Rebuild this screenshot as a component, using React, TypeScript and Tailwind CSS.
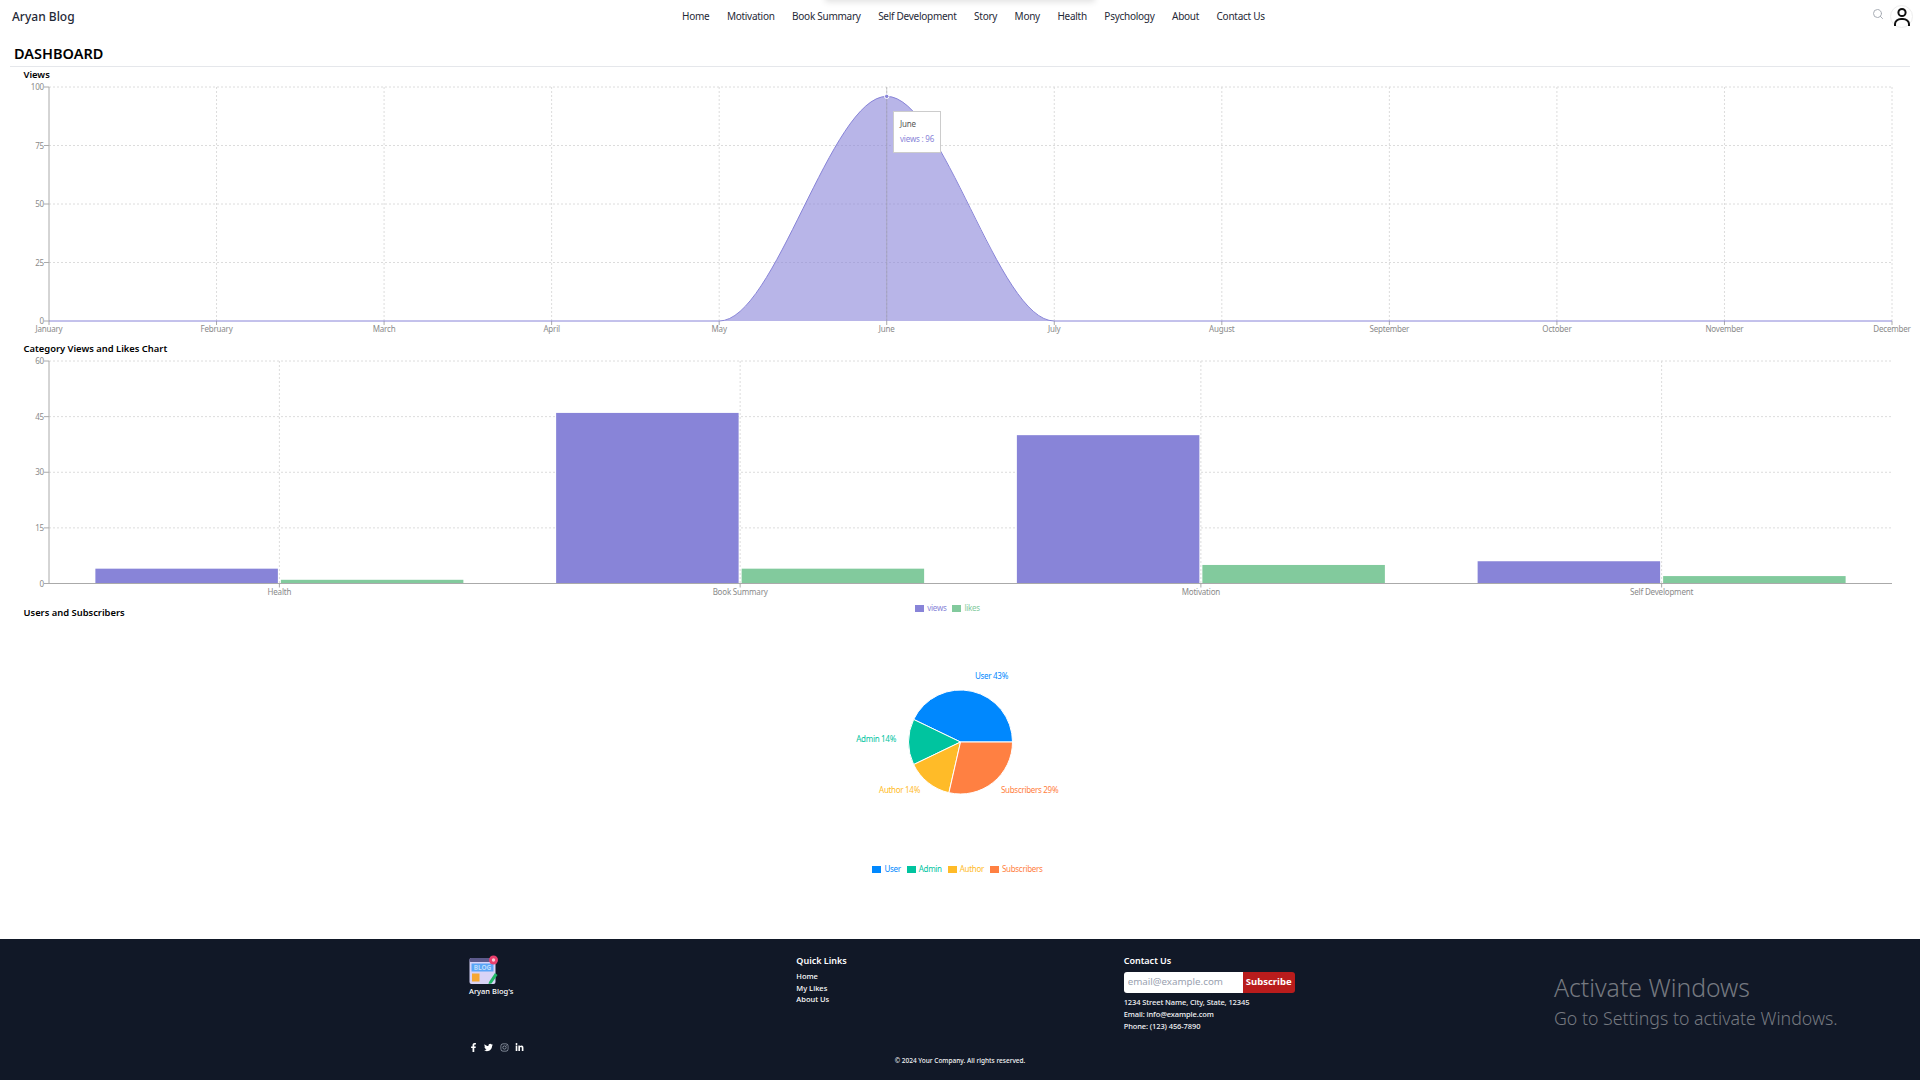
import { Search } from 'lucide-react'
import { FaFacebookF, FaInstagram, FaLinkedinIn, FaTwitter } from 'react-icons/fa'

const navLinks = ['Home', 'Motivation', 'Book Summary', 'Self Development', 'Story', 'Mony', 'Health', 'Psychology', 'About', 'Contact Us']
const months = ['January', 'February', 'March', 'April', 'May', 'June', 'July', 'August', 'September', 'October', 'November', 'December']
const categories = [
  { name: 'Health', views: 4, likes: 1 },
  { name: 'Book Summary', views: 46, likes: 4 },
  { name: 'Motivation', views: 40, likes: 5 },
  { name: 'Self Development', views: 6, likes: 2 },
]

const LEFT = 49
const RIGHT = 1892

const tickText = 'fill-[#8a8a8a] text-[8px] tracking-[-0.2px]'

// views area chart, coordinates are page x and local y
function ViewsChart() {
  const top = 5
  const bottom = 239
  const step = (RIGHT - LEFT) / 11
  const xs = months.map((_, i) => LEFT + i * step)
  const peak = bottom - (bottom - top) * 0.96
  const may = xs[4]
  const june = xs[5]
  const july = xs[6]
  const d = step / 3
  const curve = `M${LEFT},${bottom} L${may},${bottom} C${may + d},${bottom} ${june - d},${peak} ${june},${peak} C${june + d},${peak} ${july - d},${bottom} ${july},${bottom} L${RIGHT},${bottom}`

  return (
    <div className="relative h-[259px]">
      <svg className="h-full w-full" xmlns="http://www.w3.org/2000/svg">
        {[0, 25, 50, 75, 100].map((v) => {
          const y = bottom - ((bottom - top) * v) / 100
          return (
            <g key={v}>
              {v > 0 && <line x1={LEFT} x2={RIGHT} y1={y} y2={y} stroke="#dcdcdc" strokeDasharray="2 2" />}
              <line x1={LEFT - 5} x2={LEFT} y1={y} y2={y} stroke="#aaa" />
              <text x={LEFT - 5} y={y + 3} textAnchor="end" className={tickText}>{v}</text>
            </g>
          )
        })}
        {xs.map((x, i) => (
          <g key={months[i]}>
            {i > 0 && <line x1={x} x2={x} y1={top} y2={bottom} stroke="#dcdcdc" strokeDasharray="2 2" />}
            <line x1={x} x2={x} y1={bottom} y2={bottom + 4} stroke="#aaa" />
            <text x={x} y={bottom + 11} textAnchor="middle" className={tickText}>{months[i]}</text>
          </g>
        ))}
        <line x1={LEFT} x2={LEFT} y1={top} y2={bottom} stroke="#aaa" />
        <path d={`${curve} Z`} fill="#8884d8" fillOpacity={0.6} />
        <path d={curve} fill="none" stroke="#8884d8" />
        <line x1={june} x2={june} y1={top} y2={bottom} stroke="#999" strokeOpacity={0.45} />
        <circle cx={june} cy={peak} r={2.2} fill="#8884d8" stroke="#fff" strokeWidth={1} />
      </svg>
      <div className="absolute left-[893px] top-[29px] h-[42px] w-[48px] border border-[#ccc] bg-white pl-[6px] pt-[3.5px] text-[8px] leading-[15px] tracking-[-0.2px]">
        <p className="text-[#555]">June</p>
        <p className="whitespace-nowrap text-[#8884d8]">views : 96</p>
      </div>
    </div>
  )
}

function CategoryChart() {
  const top = 5
  const bottom = 227.5
  const band = (RIGHT - LEFT) / 4
  const h = bottom - top
  return (
    <div className="relative h-[249px]">
      <svg className="h-full w-full" xmlns="http://www.w3.org/2000/svg">
        {[0, 15, 30, 45, 60].map((v) => {
          const y = bottom - (h * v) / 60
          return (
            <g key={v}>
              {v > 0 && <line x1={LEFT} x2={RIGHT} y1={y} y2={y} stroke="#dcdcdc" strokeDasharray="2 2" />}
              <line x1={LEFT - 5} x2={LEFT} y1={y} y2={y} stroke="#aaa" />
              <text x={LEFT - 5} y={y + 3} textAnchor="end" className={tickText}>{v}</text>
            </g>
          )
        })}
        {categories.map((c, i) => {
          const cx = LEFT + band * i + band / 2
          const hv = (h * c.views) / 60
          const hl = (h * c.likes) / 60
          return (
            <g key={c.name}>
              <line x1={cx} x2={cx} y1={top} y2={bottom} stroke="#dcdcdc" strokeDasharray="2 2" />
              <rect x={cx - 184} y={bottom - hv} width={182.5} height={hv} fill="#8884d8" />
              <rect x={cx + 1.5} y={bottom - hl} width={182.5} height={hl} fill="#82ca9d" />
              <line x1={cx} x2={cx} y1={bottom} y2={bottom + 4} stroke="#aaa" />
              <text x={cx} y={bottom + 11} textAnchor="middle" className={tickText}>{c.name}</text>
            </g>
          )
        })}
        <line x1={LEFT} x2={LEFT} y1={top} y2={bottom} stroke="#aaa" />
        <line x1={LEFT} x2={RIGHT} y1={bottom} y2={bottom} stroke="#aaa" />
      </svg>
      <div className="absolute left-0 right-[25px] top-[244px]">
        <Legend items={[{ name: 'views', color: '#8884d8' }, { name: 'likes', color: '#82ca9d' }]} />
      </div>
    </div>
  )
}

function Legend({ items }: { items: { name: string; color: string }[] }) {
  return (
    <div className="flex justify-center gap-[6px] text-[8px] leading-[16px] tracking-[-0.3px]">
      {items.map((item) => (
        <span key={item.name} className="flex items-center gap-[3px]" style={{ color: item.color }}>
          <span className="h-[7px] w-[9px]" style={{ background: item.color }} />
          {item.name}
        </span>
      ))}
    </div>
  )
}

const slices = [
  { name: 'User', pct: 3 / 7, color: '#0088FE', label: 'User 43%', lx: 975, ly: 59, anchor: 'start' },
  { name: 'Admin', pct: 1 / 7, color: '#00C49F', label: 'Admin 14%', lx: 896, ly: 122, anchor: 'end' },
  { name: 'Author', pct: 1 / 7, color: '#FFBB28', label: 'Author 14%', lx: 920, ly: 173, anchor: 'end' },
  { name: 'Subscribers', pct: 2 / 7, color: '#FF8042', label: 'Subscribers 29%', lx: 1001, ly: 173, anchor: 'start' },
]

function PieChart() {
  const cx = 960.5
  const cy = 122
  const r = 52
  let angle = 0
  return (
    <div className="pb-[62px] pr-[5px]">
      <svg className="h-[241px] w-full overflow-visible" xmlns="http://www.w3.org/2000/svg">
        {slices.map((s) => {
          const a0 = angle
          const a1 = angle + s.pct * Math.PI * 2
          angle = a1
          const x0 = cx + r * Math.cos(a0)
          const y0 = cy - r * Math.sin(a0)
          const x1 = cx + r * Math.cos(a1)
          const y1 = cy - r * Math.sin(a1)
          return (
            <path
              key={s.name}
              d={`M${cx},${cy} L${x0},${y0} A${r},${r} 0 0 0 ${x1},${y1} Z`}
              fill={s.color}
              stroke="#fff"
            />
          )
        })}
        {slices.map((s) => (
          <text key={s.label} x={s.lx} y={s.ly} textAnchor={s.anchor as 'start' | 'end'} fill={s.color} className="text-[8px] tracking-[-0.3px]">
            {s.label}
          </text>
        ))}
      </svg>
      <Legend items={slices.map((s) => ({ name: s.name, color: s.color }))} />
    </div>
  )
}

function BlogLogo() {
  return (
    <svg width="30" height="30" viewBox="0 0 30 30" xmlns="http://www.w3.org/2000/svg">
      <rect x="0.5" y="3" width="26" height="26" rx="2" fill="#d8d3f7" />
      <rect x="0.5" y="3" width="26" height="4" rx="1.5" fill="#5d5a8c" />
      <rect x="2.5" y="8.5" width="22" height="8" fill="#5aa5f7" />
      <text x="13.5" y="15" textAnchor="middle" fill="#bcdcfb" className="text-[6.5px] font-bold">BLOG</text>
      <rect x="3" y="18.5" width="7.5" height="8" fill="#f6a733" />
      <path d="M20 27 L26 18 L28.5 20 L22.5 28.5 L19.5 29 Z" fill="#22b866" />
      <circle cx="24.5" cy="5" r="4.5" fill="#ea3f6d" />
      <circle cx="24.5" cy="5" r="1.7" fill="#f9c9d6" />
    </svg>
  )
}

function App() {
  return (
    <div className="relative min-h-screen overflow-hidden bg-white font-['Noto_Sans',sans-serif]">
      {/* shadow of the closed dropdown above the page */}
      <div className="absolute -top-[10px] left-[825px] h-[10px] w-[270px] bg-white shadow-[0_2px_6px_rgba(0,0,0,0.12)]" />

      {/* Header */}
      <div className="flex h-[33px] items-center text-[#1f2937]">
        <div className="w-[682px] pl-3 text-[12px] font-medium">Aryan Blog</div>
        <nav className="flex gap-[17.5px] text-[10px] tracking-[-0.27px]">
          {navLinks.map((link) => (
            <a key={link}>{link}</a>
          ))}
        </nav>
        <div className="ml-auto mr-[7px] flex items-center gap-[6px]">
          <Search size={12} className="-mt-[6px] text-[#a8adb5]" />
          <span className="flex h-[23px] w-[23px] items-center justify-center rounded-full border border-[#eee]">
            <svg width="18" height="20" viewBox="0 0 18 20" fill="none" stroke="#111" strokeWidth="2">
              <circle cx="9" cy="5.5" r="3.6" />
              <path d="M2 19 v-2 a6 5 0 0 1 6 -5 h2 a6 5 0 0 1 6 5 v2" />
            </svg>
          </span>
        </div>
      </div>

      {/* Title */}
      <div className="mx-[10px] flex h-[34px] items-end border-b border-[#e5e7eb] pb-[3px] pl-1">
        <h1 className="text-[14.5px] font-semibold leading-[20px] text-black">DASHBOARD</h1>
      </div>

      <ChartTitle>Views</ChartTitle>
      <ViewsChart />
      <ChartTitle>Category Views and Likes Chart</ChartTitle>
      <CategoryChart />
      <ChartTitle>Users and Subscribers</ChartTitle>
      <PieChart />

      {/* Footer */}
      <footer className="h-[141px] bg-[#111827] pt-[16px] text-white">
        <div className="mx-auto grid w-[982px] grid-cols-3">
          <div className="h-[100px]">
            <BlogLogo />
            <p className="text-[7.5px] font-medium leading-[12px]">Aryan Blog's</p>
            <div className="-ml-[3.5px] mt-[46px] flex items-center text-[9px]">
              <span className="flex w-[15.5px] justify-center"><FaFacebookF /></span>
              <span className="flex w-[15.5px] justify-center"><FaTwitter /></span>
              <span className="flex w-[15.5px] justify-center"><FaInstagram className="text-gray-400" /></span>
              <span className="flex w-[15.5px] justify-center"><FaLinkedinIn /></span>
            </div>
          </div>
          <div>
            <h3 className="text-[9px] font-semibold leading-[12px]">Quick Links</h3>
            <ul className="mt-[4px] text-[7.5px] font-medium leading-[11.5px]">
              <li>Home</li>
              <li>My Likes</li>
              <li>About Us</li>
            </ul>
          </div>
          <div>
            <h3 className="text-[9px] font-semibold leading-[12px]">Contact Us</h3>
            <div className="mt-[5px] flex h-[21px] w-[171px] overflow-hidden rounded-[3px]">
              <input
                readOnly
                placeholder="email@example.com"
                className="w-[119px] bg-white px-1 text-[9.75px] text-black outline-none placeholder:text-gray-400"
              />
              <button className="flex-1 bg-[#b91c1c] text-[9.5px] font-bold">Subscribe</button>
            </div>
            <div className="mt-[3px] text-[7.5px] font-medium leading-[12px] tracking-[-0.1px] text-gray-100">
              <p>1234 Street Name, City, State, 12345</p>
              <p>Email: info@example.com</p>
              <p>Phone: (123) 456-7890</p>
            </div>
          </div>
        </div>
        <p className="text-center text-[6.5px] font-medium leading-[12px] text-gray-100">© 2024 Your Company. All rights reserved.</p>
      </footer>

      {/* Windows watermark */}
      <div className="absolute left-[1554px] top-[973px] font-light text-[#757980]">
        <p className="text-[24.75px] leading-[30px]">Activate Windows</p>
        <p className="text-[17.75px] leading-[30px]">Go to Settings to activate Windows.</p>
      </div>
    </div>
  )
}

function ChartTitle({ children }: { children: string }) {
  return <h2 className="h-[15px] pl-[23.5px] pt-[1px] text-[9.4px] font-semibold leading-[14px] text-black">{children}</h2>
}

export default App
